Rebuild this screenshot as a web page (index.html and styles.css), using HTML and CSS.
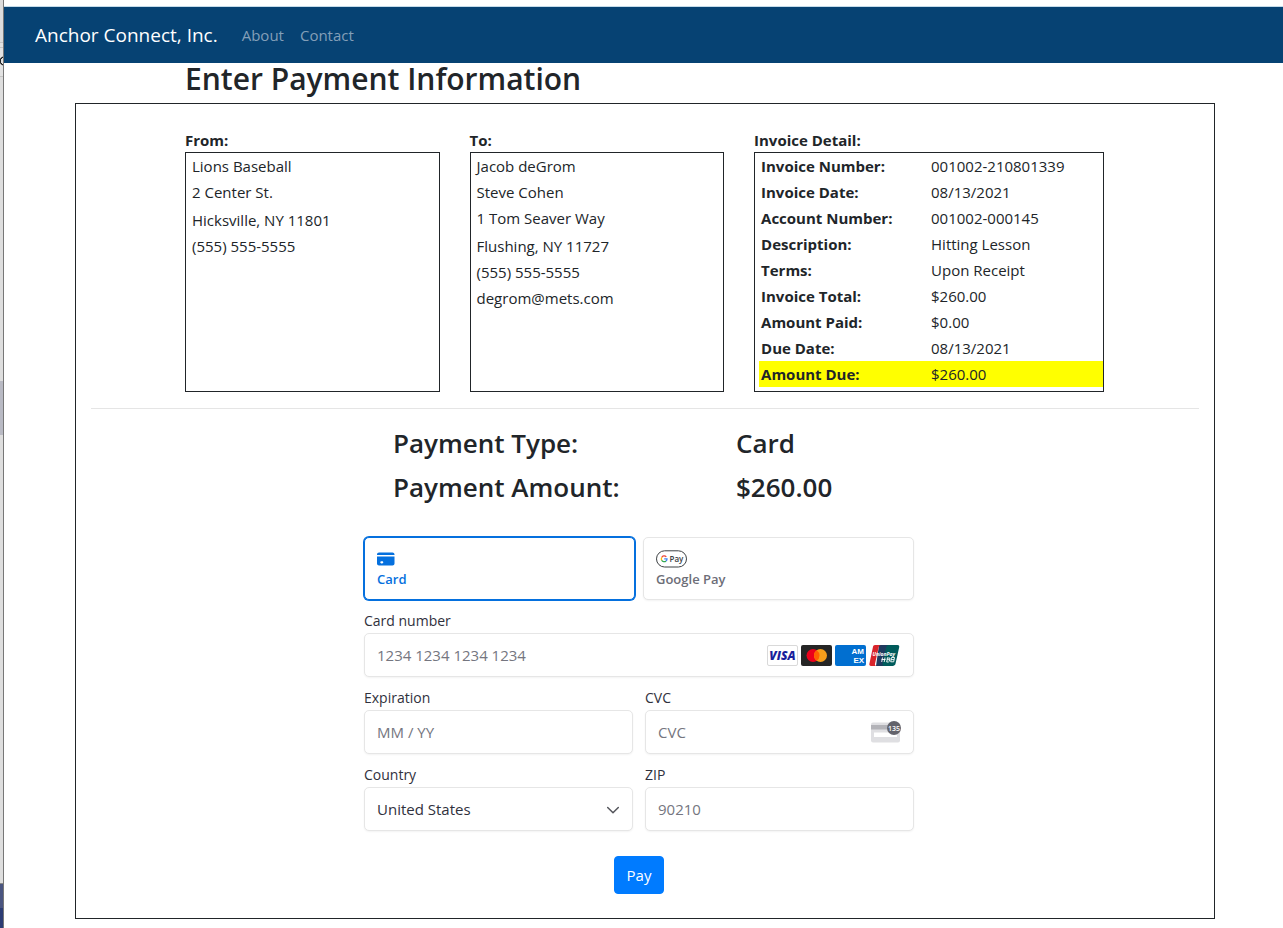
FILE: index.html
```
<!DOCTYPE html>
<html lang="en">
<head>
  <meta charset="utf-8">
  <meta name="viewport" content="width=device-width, initial-scale=1">
  <title>Enter Payment Information - Anchor Connect, Inc.</title>
  <link rel="stylesheet" href="styles.css">
</head>
<body>
  <div class="window-edge"></div>

  <div class="page">
    <nav class="navbar">
      <a class="navbar-brand" href="#">Anchor Connect, Inc.</a>
      <a class="nav-link" href="#">About</a>
      <a class="nav-link" href="#">Contact</a>
    </nav>

    <main class="container">
      <h2 class="page-title">Enter Payment Information</h2>

      <div class="payment-box">
        <div class="invoice-row">
          <section class="col">
            <h6 class="col-title">From:</h6>
            <div class="info-box address">
              <div>Lions Baseball</div>
              <div>2 Center St.</div>
              <div class="city">Hicksville, NY 11801</div>
              <div>(555) 555-5555</div>
            </div>
          </section>

          <section class="col">
            <h6 class="col-title">To:</h6>
            <div class="info-box address">
              <div>Jacob deGrom</div>
              <div>Steve Cohen</div>
              <div>1 Tom Seaver Way</div>
              <div class="city">Flushing, NY 11727</div>
              <div>(555) 555-5555</div>
              <div>degrom@mets.com</div>
            </div>
          </section>

          <section class="col">
            <h6 class="col-title">Invoice Detail:</h6>
            <div class="info-box">
              <table class="invoice-table">
                <tr><th>Invoice Number:</th><td>001002-210801339</td></tr>
                <tr><th>Invoice Date:</th><td>08/13/2021</td></tr>
                <tr><th>Account Number:</th><td>001002-000145</td></tr>
                <tr><th>Description:</th><td>Hitting Lesson</td></tr>
                <tr><th>Terms:</th><td>Upon Receipt</td></tr>
                <tr><th>Invoice Total:</th><td>$260.00</td></tr>
                <tr><th>Amount Paid:</th><td>$0.00</td></tr>
                <tr><th>Due Date:</th><td>08/13/2021</td></tr>
                <tr class="amount-due"><th>Amount Due:</th><td>$260.00</td></tr>
              </table>
            </div>
          </section>
        </div>

        <hr class="divider">

        <form class="payment-form" id="paymentForm">
          <div class="summary">
            <h3>Payment Type:</h3>
            <h3>Card</h3>
            <h3>Payment Amount:</h3>
            <h3>$260.00</h3>
          </div>

          <div class="tabs">
            <button type="button" class="tab selected">
              <svg class="tab-icon" width="18" height="18" viewBox="0 0 18 18">
                <path fill="#0570de" d="M0 4.500C0 3.400.9 2.500 2 2.500h13.500c1.100 0 2 .9 2 2V5H0z"/>
                <path fill="#0570de" fill-rule="evenodd" d="M0 6.500h17.500v7c0 1.100-.9 2-2 2H2c-1.100 0-2-.9-2-2zM4.500 11.200c-.7 0-1.200.5-1.200 1.100s.5 1.100 1.200 1.100h.6c.7 0 1.200-.5 1.200-1.100s-.5-1.100-1.200-1.100z"/>
              </svg>
              <span>Card</span>
            </button>
            <button type="button" class="tab">
              <svg class="tab-icon" width="32" height="18" viewBox="0 0 32 18">
                <rect x=".5" y=".8" width="30" height="16.200" rx="8.100" fill="#fff" stroke="#3c4043"/>
                <g fill="none" stroke-width="1.300">
                  <path stroke="#ea4335" d="M10.300 6.900A2.800 2.800 0 0 0 5.700 7.500"/>
                  <path stroke="#fbbc04" d="M5.700 7.500A2.800 2.800 0 0 0 5.700 10.300"/>
                  <path stroke="#34a853" d="M5.700 10.300A2.800 2.800 0 0 0 10 11"/>
                  <path stroke="#4285f4" d="M10 11A2.800 2.800 0 0 0 11 8.900H8.200"/>
                </g>
                <text x="13.500" y="11.800" class="gpay-text">Pay</text>
              </svg>
              <span>Google Pay</span>
            </button>
          </div>

          <div class="field">
            <label for="cardNumber">Card number</label>
            <div class="input-wrap">
              <input type="text" id="cardNumber" placeholder="1234 1234 1234 1234">
              <div class="field-icons">
                <svg width="31" height="21" viewBox="0 0 31 21">
                  <rect x=".5" y=".5" width="30" height="20" rx="1.500" fill="#fff" stroke="#d9d9d9"/>
                  <text x="15.500" y="14.800" text-anchor="middle" class="visa-text">VISA</text>
                </svg>
                <svg width="31" height="21" viewBox="0 0 31 21">
                  <rect width="31" height="21" rx="2" fill="#252525"/>
                  <circle cx="12" cy="10.500" r="6.500" fill="#eb001b"/>
                  <circle cx="19.500" cy="10.500" r="6.500" fill="#f79e1b"/>
                  <path fill="#ff5f00" d="M15.750 5.200a6.500 6.500 0 0 1 0 10.600 6.500 6.500 0 0 1 0-10.600z"/>
                </svg>
                <svg width="31" height="21" viewBox="0 0 31 21">
                  <rect width="31" height="21" rx="2" fill="#016fd0"/>
                  <text x="16.500" y="9" class="amex-text">AM</text>
                  <text x="18.500" y="18.300" class="amex-text">EX</text>
                </svg>
                <svg width="31" height="21" viewBox="0 0 31 21">
                  <path fill="#005b5b" d="M17 0h11.500c1.400 0 2 .9 1.700 2.200l-3.700 16.600c-.3 1.300-1.500 2.200-2.800 2.200H12z"/>
                  <path fill="#1f3a5f" d="M10 0h9.500c-1.200 0-2 .9-2.300 2.200l-3.700 16.600c-.3 1.300.2 2.200 1.500 2.200H7z"/>
                  <path fill="#d8232a" d="M6 0h6c-1.200 0-2 .9-2.300 2.200L6 18.800c-.3 1.300.2 2.200 1.500 2.200H2C.7 21 .1 20.100.4 18.800L3.900 2.200C4.200.9 4.800 0 6 0z"/>
                  <text x="3.500" y="10.500" class="union-text">UnionPay</text>
                  <path stroke="#fff" fill="none" stroke-width=".9" d="M13.500 12.500l-.8 4.500M16 12.500l-.8 4.500M12.600 14.500h4M18.500 12.500l-.8 4.500h2M18.400 13h2.500l-.6 3.500M18 14.700h2.500M22.500 12.500h3l-.8 4.300h-3zM22 14.600h3"/>
                </svg>
              </div>
            </div>
          </div>

          <div class="field-row">
            <div class="field">
              <label for="expiration">Expiration</label>
              <input type="text" id="expiration" placeholder="MM / YY">
            </div>
            <div class="field">
              <label for="cvc">CVC</label>
              <div class="input-wrap">
                <input type="text" id="cvc" placeholder="CVC">
                <div class="field-icons">
                  <svg width="30" height="22" viewBox="0 0 30 22">
                    <rect x="1" y="1.500" width="29" height="20" rx="2" fill="#dfdfe2"/>
                    <path fill="#b3b3b8" d="M1 4h29v4.500H1z"/>
                    <path fill="#fff" d="M4 11.500h23v4.500H4z"/>
                    <circle cx="24" cy="7" r="7" fill="#63636b"/>
                    <text x="24" y="9.800" text-anchor="middle" class="cvc-text">135</text>
                  </svg>
                </div>
              </div>
            </div>
          </div>

          <div class="field-row">
            <div class="field">
              <label for="country">Country</label>
              <div class="input-wrap">
                <select id="country">
                  <option>United States</option>
                </select>
                <svg class="chevron" width="12" height="12" viewBox="0 0 12 12">
                  <path d="M.7 3.500L6 8.800l5.300-5.300" fill="none" stroke="#55565c" stroke-width="1.500" stroke-linecap="round" stroke-linejoin="round"/>
                </svg>
              </div>
            </div>
            <div class="field">
              <label for="zip">ZIP</label>
              <input type="text" id="zip" placeholder="90210">
            </div>
          </div>

          <button type="submit" class="pay-button">Pay</button>
        </form>
      </div>
    </main>
  </div>
</body>
</html>
```
FILE: styles.css
```
:root {
  --navbar-color: #064273;
  --primary-color: #007bff;
  --selected-color: #0570de;
  --text-color: #212529;
  --label-color: #30313d;
  --muted-color: #6d6e78;
  --placeholder-color: #757680;
  --border-color: #e6e6e6;
}

* {
  margin: 0;
  padding: 0;
  box-sizing: border-box;
}

body {
  font-family: "Segoe UI", "Open Sans", "Noto Sans", sans-serif;
  font-size: 15px;
  line-height: 26px;
  color: var(--text-color);
  background-color: #fff;
  min-height: 100vh;
  display: flex;
}

/* Sliver of the window behind the page */
.window-edge {
  width: 4px;
  border-right: 1px solid #777;
  background:
    radial-gradient(circle at 4px 61px, transparent 3px, #222 3px 4px, transparent 5px),
    linear-gradient(#dcdcdc 0 42px, #c4c4c4 42px 43px, #e2e2e2 43px 47px, #c4c4c4 47px 48px,
      #e2e2e2 48px 76px, #c4c4c4 76px 77px, #dedede 77px 381px, #b9bac4 381px 435px,
      #dedede 435px 883px, #888 883px 884px, #4a5580 884px 908px, #2c3c74 908px);
}

.page {
  flex: 1;
  padding-top: 6px;
}

/* Navbar */
.navbar {
  display: flex;
  align-items: center;
  height: 57px;
  padding: 0 31px;
  background-color: var(--navbar-color);
  border-top: 1px solid #c5dcea;
}

.navbar a {
  text-decoration: none;
}

.navbar-brand {
  color: #fff;
  font-size: 19px;
  margin-right: 16px;
}

.nav-link {
  color: #839fb8;
  padding: 0 8px;
}

/* Content */
.container {
  max-width: 1143px;
  padding-left: 3px;
  margin: 0 auto;
}

.page-title {
  font-size: 30px;
  font-weight: 600;
  line-height: 32px;
  margin-bottom: 8px;
  padding-left: 110px;
}

.payment-box {
  border: 1px solid var(--text-color);
  padding: 24px 15px;
}

.invoice-row {
  display: grid;
  grid-template-columns: 8fr 8fr 11fr;
  gap: 30px;
  padding: 0 95px 0 94px;
}

.col {
  display: flex;
  flex-direction: column;
}

.col-title {
  font-size: 15px;
  font-weight: 700;
  line-height: 24px;
}

.info-box {
  flex: 1;
  border: 1px solid var(--text-color);
  padding: 0 0 4px 4px;
}

.address div {
  padding-left: 2px;
}

.address .city {
  margin-top: 2px;
}

.invoice-table {
  width: 100%;
  border-collapse: collapse;
}

.invoice-table th {
  width: 170px;
  text-align: left;
  font-weight: 700;
}

.invoice-table th,
.invoice-table td {
  padding-left: 2px;
}

.amount-due {
  background-color: #ff0;
}

.divider {
  border: 0;
  border-top: 1px solid #e5e5e5;
  margin: 16px 0;
}

/* Payment form */
.payment-form {
  max-width: 562px;
  padding-right: 12px;
  margin: 0 auto;
}

.summary {
  display: grid;
  grid-template-columns: 343px 1fr;
  row-gap: 8px;
  padding-left: 29px;
  margin-bottom: 32px;
}

.summary h3 {
  font-size: 26px;
  font-weight: 600;
  line-height: 36px;
}

.tabs {
  display: flex;
  gap: 8px;
  margin-bottom: 12px;
}

.tab {
  flex: 1;
  display: flex;
  flex-direction: column;
  align-items: flex-start;
  height: 63px;
  padding: 12px;
  font-family: inherit;
  font-size: 13px;
  font-weight: 600;
  line-height: 20px;
  color: var(--muted-color);
  background-color: #fff;
  border: 1px solid var(--border-color);
  border-radius: 5px;
  box-shadow: 0 1px 2px rgba(0, 0, 0, 0.05);
  cursor: pointer;
}

.tab.selected {
  color: var(--selected-color);
  border-color: var(--selected-color);
  box-shadow: 0 0 0 1px var(--selected-color);
}

.tab-icon {
  flex: none;
  margin-bottom: 1px;
}

.field {
  flex: 1;
  margin-bottom: 12px;
}

.field-row {
  display: flex;
  gap: 12px;
}

.field label {
  display: block;
  font-size: 14px;
  line-height: 17px;
  margin-bottom: 4px;
  color: var(--label-color);
}

.field input,
.field select {
  display: block;
  width: 100%;
  height: 44px;
  padding: 0 12px;
  font-family: inherit;
  font-size: 15px;
  color: var(--label-color);
  background-color: #fff;
  border: 1px solid var(--border-color);
  border-radius: 5px;
  box-shadow: 0 1px 2px rgba(0, 0, 0, 0.05);
  appearance: none;
}

.field input::placeholder {
  color: var(--placeholder-color);
}

.field input:focus,
.field select:focus {
  outline: none;
  border-color: var(--selected-color);
}

.input-wrap {
  position: relative;
}

.field-icons {
  position: absolute;
  top: 0;
  right: 14px;
  height: 100%;
  display: flex;
  align-items: center;
  gap: 3px;
}

.field-icons svg {
  overflow: visible;
}

.chevron {
  position: absolute;
  top: 17px;
  right: 14px;
  pointer-events: none;
}

.gpay-text {
  font-size: 8px;
  fill: #3c4043;
}

.visa-text {
  font-size: 12px;
  font-weight: 800;
  font-style: italic;
  fill: #1a1f9c;
}

.amex-text {
  font-family: "Liberation Sans", Arial, sans-serif;
  font-size: 8px;
  font-weight: 700;
  fill: #fff;
}

.union-text {
  font-size: 5px;
  font-weight: 700;
  font-style: italic;
  fill: #fff;
}

.cvc-text {
  font-size: 7px;
  font-weight: 600;
  fill: #fff;
}

.pay-button {
  display: block;
  margin: 13px auto 0;
  padding: 0 12px;
  height: 38px;
  font-family: inherit;
  font-size: 15px;
  color: #fff;
  background-color: var(--primary-color);
  border: 1px solid var(--primary-color);
  border-radius: 4px;
  cursor: pointer;
}

.pay-button:hover {
  background-color: #0069d9;
}
```
